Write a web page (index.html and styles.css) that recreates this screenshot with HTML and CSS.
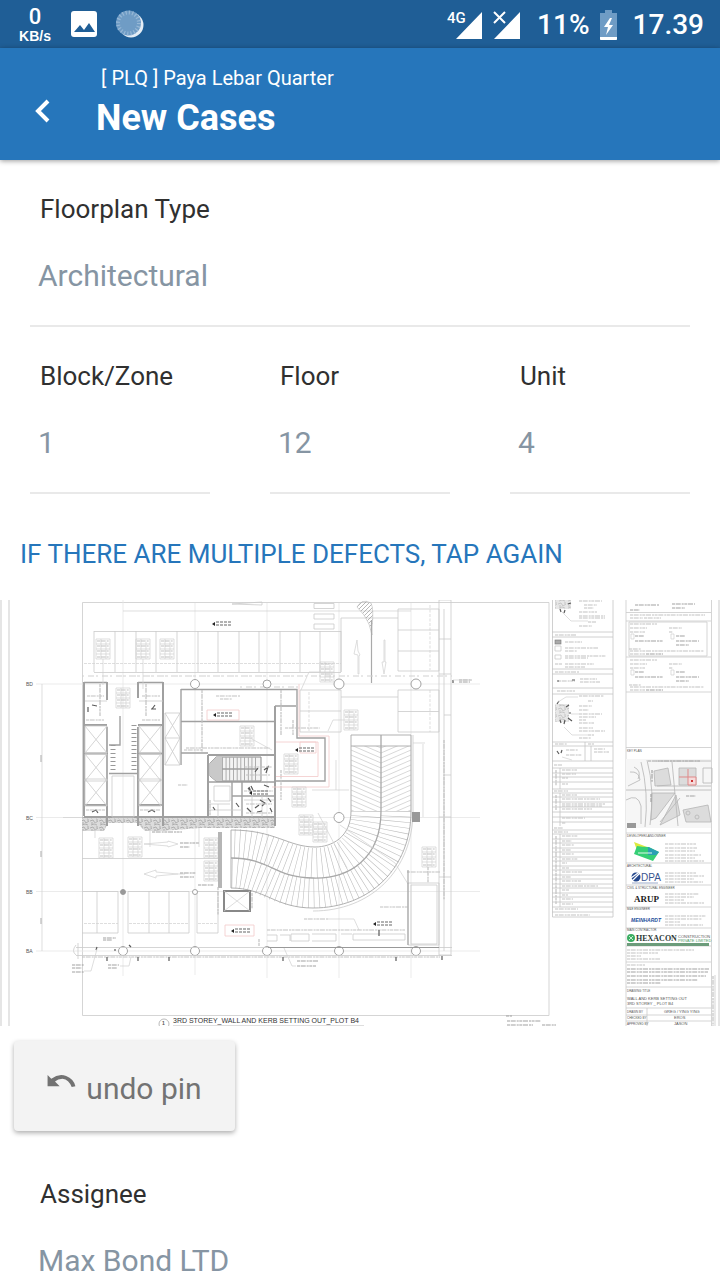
FILE: index.html
```html
<!DOCTYPE html>
<html lang="en">
<head>
<meta charset="utf-8">
<meta name="viewport" content="width=device-width, initial-scale=1">
<title>New Cases</title>
<link rel="stylesheet" href="styles.css">
</head>
<body>
<div class="app">
  <div class="status">
    <div class="status-side">
      <div class="speed"><span class="speed-num">0</span><span class="speed-unit">KB/s</span></div>
      <svg class="pic" width="26" height="26" viewBox="0 0 26 26"><rect width="26" height="26" rx="3" fill="#fff"/><path d="M3 21l6-7 4 5 5-7 6 9z" fill="#1f5e96"/></svg>
      <svg width="30" height="30" viewBox="0 0 30 30"><circle cx="15" cy="16" r="12.500" fill="#e4edf5"/><circle cx="12.500" cy="14" r="12.500" fill="#6f9cc5"/><circle cx="12.500" cy="14" r="10.500" fill="none" stroke="#97b8d6" stroke-width="4" stroke-dasharray="1.200 2.100"/></svg>
    </div>
    <div class="status-side status-right">
      <svg width="76" height="30" viewBox="0 0 76 30"><text x="0" y="13" class="net">4G</text><path d="M9 29L35 2V29zM47 29L73 2V29z" fill="#fff"/><path d="M45 0H60V13L55 17L45 12z" fill="#1f5e96"/><path d="M47 2l11 11M58 2L47 13" stroke="#fff" stroke-width="2"/></svg>
      <span class="pct">11%</span>
      <svg class="bat" width="17" height="30" viewBox="0 0 17 30"><path d="M5 0h7v3h5v27H0V3h5z" fill="#6f9cc5"/><path d="M0 27h17v2q0 1-1 1H1q-1 0-1-1z" fill="#fff"/><path d="M10 8l-6 9h4l-2 8 7-10H9l3-7z" fill="#fff"/></svg>
      <span class="clock">17.39</span>
    </div>
  </div>
  <header class="bar">
    <button class="back" aria-label="Back"><svg width="16" height="24" viewBox="0 0 16 24"><path d="M13 2L3 12l10 10" fill="none" stroke="#fff" stroke-width="4"/></svg></button>
    <div class="titles">
      <div class="project">[&#8197;PLQ&#8197;] Paya Lebar Quarter</div>
      <h1>New Cases</h1>
    </div>
  </header>
  <main>
    <div class="row">
      <div class="field"><label for="type">Floorplan Type</label><input id="type" type="text" value="Architectural"></div>
    </div>
    <div class="row">
      <div class="field"><label for="block">Block/Zone</label><input id="block" type="text" value="1"></div>
      <div class="field"><label for="floor">Floor</label><input id="floor" type="text" value="12"></div>
      <div class="field"><label for="unit">Unit</label><input id="unit" type="text" value="4"></div>
    </div>
    <p class="hint">IF THERE ARE MULTIPLE DEFECTS, TAP AGAIN</p>
    <svg class="plan" viewBox="0 600 720 426" role="img" aria-label="Floor plan">
      <defs>
        <pattern id="chevL" width="30" height="5" patternUnits="userSpaceOnUse" x="351" y="745"><path d="M0 0L30 13M0 -5L30 8M0 -10L30 3M0 5L30 18M0 -15L30 -2" stroke="#bdbdbd" stroke-width=".6"/></pattern>
        <pattern id="chevR" width="30" height="5" patternUnits="userSpaceOnUse" x="381" y="745"><path d="M0 13L30 0M0 8L30 -5M0 3L30 -10M0 18L30 5" stroke="#bdbdbd" stroke-width=".6"/></pattern>
        <pattern id="hatch" width="4" height="4" patternUnits="userSpaceOnUse"><path d="M0 4L4 0" stroke="#999" stroke-width=".7"/></pattern>
        <pattern id="rubble" width="9" height="7" patternUnits="userSpaceOnUse"><rect width="9" height="7" fill="#dcdcdc"/><path d="M0 2l3-1 2 3 3-2M1 6l3-1 3 1M7 0v2M2 3v2" stroke="#a2a2a2" stroke-width=".8" fill="none"/></pattern>
        <g id="note"><path d="M0 0H14V20H0zM0 5H14M0 10H14M0 15H14M5 0V20M10 3V20" class="thin"/><path d="M1 2H13M1 7H13M1 12H13M1 18H13" class="micro"/></g>
        <g id="shaft"><path d="M0 0H22V27H0zM0 0L22 27M22 0L0 27" class="line"/></g>
        <g id="callout"><path d="M0 2l3-2v4z" fill="#222"/><path d="M4 0h15M4 3h15" stroke="#999" stroke-width="1.500" stroke-dasharray="3 1"/></g>
        <g id="form"><path d="M3 2H30M3 6H20M42 6H55M3 10H18M42 10H46M2 27H14" class="micro"/><path d="M8 14H17M8 19H36M49 14H58M49 19H72M49 23H62" class="micro dark"/><path d="M4 12h3v5h-3zM44 12h3v5h-3z" class="thin"/><path d="M3 29H77M3 32H18" class="micro"/><path d="M19 32H36" class="micro dark"/></g>
      </defs>
      <rect y="600" width="720" height="426" fill="#fff"/>
      <path d="M1 600V1026M9 600V1026M719 600V1026" stroke="#ddd" stroke-width="1.500"/>

      <!-- sheet border and grid -->
      <path d="M82.500 602.500H549V1015.500H82.500z" class="line"/>
      <path d="M123 600V976M195 603V975M267 603V978M339 603V978M411 603V978M36 684H480M36 817.500H480M36 891.500H480M36 951H480" stroke="#e6e6e6" stroke-width=".8"/>
      <path d="M42 684V951M123 611H411M63 817.500H82" class="thin"/>
      <g class="grid"><text x="26" y="686">BD</text><text x="26" y="820">BC</text><text x="26" y="894">BB</text><text x="26" y="953">BA</text></g>
      <path d="M41 755V762M41 851V857M41 918V924" stroke="#aaa"/>

      <!-- parking -->
      <path d="M94 631.500H341M94 631V672M115 631V672M136 631V672M156 631V672M177 631V672M198 631V672M218 631V672M239 631V672M259 631V672M280 631V672M300 631V672M320 631V672M341 631V672M94 672.500H341" class="line"/>
      <path d="M84 663.500H341" class="thin" stroke-dasharray="3 1"/>
      <path d="M314 603.500h20v5h-20zM314 614h20v5h-20zM314 624h20v5h-20zM232 604l30-2v3zM398 609H439V671H398zM398 630H439M398 651H439M398 690H439V732H398zM398 711.500H439M341 618H398M341 697H398M341 618V672M300 690H341V732H300zM300 711H341M444 609V951M451 600V956M439 600V955" class="line"/>
      <path d="M430 605V670M430 690V732M309 692V732" class="thin" stroke-dasharray="3 1.500"/>
      <path d="M357 607q5-9 14-4q3 6 1 24v8q-2-12-8-20z" fill="url(#hatch)" stroke="#bbb" stroke-width=".6"/>
      <path d="M371.500 620V683" stroke="#aaa" stroke-width="1.200"/>
      <path d="M358 674V655l-4-1 3-14 1 11 2 4-1 1V674zM384 640V662h-2l2 12 2-12h-1V640z" class="thin"/>
      <path d="M82 676H296M123 676H452M240 687H298" class="micro pale"/>
      <path d="M82 891.500H118V933H82M97 891V933M128 891.500H189V933H128zM149 891V933M169 891V933M197 891.500H218V933H197zM82 858.500H218" class="line"/>
      <path d="M84 923.500H118M129 923.500H188M198 923.500H217" class="thin" stroke-dasharray="3 1"/>
      <path d="M144 844l24-2v-1l10 3-10 3v-1zM144 874l12-4v2l22 2-22 2v2zM178 874h7" class="thin"/>
      <path d="M180 843H199M180 847H190M180 873H196M180 877H194M152 832H182M198 885H214" class="micro dark"/>

      <!-- column markers -->
      <g fill="#fff" stroke="#999" stroke-width=".9"><circle cx="195" cy="684" r="4.500"/><circle cx="267" cy="684" r="4"/><circle cx="339" cy="684" r="5"/><circle cx="416" cy="684" r="5"/><circle cx="339" cy="817.500" r="5"/><circle cx="123" cy="951" r="4.500"/><circle cx="195" cy="951" r="4.500"/><circle cx="267" cy="951" r="4.500"/><circle cx="339" cy="951" r="4.500"/><circle cx="416" cy="951" r="4.500"/><circle cx="195" cy="892" r="2.500"/><circle cx="123" cy="892" r="2.500" fill="#999"/></g>

      <!-- core -->
      <path d="M82 817H275V828H200L162 831H145L137 823H108L104 831H82z" fill="url(#rubble)"/>
      <path d="M84 682V816M107 682V700M107 727V826M138 727V826M138 682V698M163 682V826M84 725H107M138 725H163M84 753.500H107M138 753.500H163M84 805H107M138 805H163M84 817H275" class="wall"/>
      <path d="M84 682.500H107M138 682.500H163M109 773.500H138M109 745H120V716M181 689.500H297V738H325V781H276M181 689V765M181 721.500H275M181 753H208M275 706H296M208 782H232V816M208 782H275M232 796H275M242 782V817" class="wall slim"/>
      <path d="M275 706V754M208 755H275V826M208 755V817" class="wall"/>
      <use href="#shaft" x="85" y="726"/><use href="#shaft" x="85" y="754"/><use href="#shaft" x="85" y="779"/><use href="#shaft" x="139" y="726"/><use href="#shaft" x="139" y="754"/><use href="#shaft" x="139" y="779"/>
      <path d="M165 713H180V765H165zM165 738H180M165 713L180 738M180 713L165 738M165 738L180 765M180 738L165 765M112 776H134V817H112zM85 701H107M139 701H163" class="line"/>
      <path d="M113 745V773M134 725V773" stroke="#999" stroke-width="5" stroke-dasharray="1 3"/>
      <path d="M216 757h45v24h-45l-6-5v-13z" fill="#f3f3f3" stroke="#888"/><path d="M216 757h6v24h-6l-6-5v-13z" fill="#c9c9c9"/>
      <path d="M222 763H258M222 775H258" stroke="#909090" stroke-width="11" stroke-dasharray=".7 3"/><path d="M222 769H258" stroke="#777" stroke-width="1.200"/>
      <path d="M214 786H230V801H214zM209 804H230M209 810H242M218 804V817M244 800H274M252 796V817M262 796V817" class="line"/>
      <path d="M88 712v-5M92 705l5 1M155 705l-3 4M151 709h5M92 812l4-2 2 3M148 812l4-2 3 2M264 770l4-3-2 6M248 788l3 4-2-5M260 800l5 3-3 3M253 790l-2-4M264 785l5 2M255 808l4-3M268 798l3 4M236 803l3 4M247 808l4 4M213 807l2 3M255 772l3-4M257 812l5-1M270 808l2 4" class="ink"/>
      <path d="M87 696H104M142 696H160M86 720H104M142 720H160M100 684V716M146 684V716M86 810H105M140 810H160M216 696H240M220 699H232M186 748H270M202 690V752M184 750H202M178 785H188M244 767H272M246 775H270M244 791H273M210 800V816M281 690V735M285 728H320M293 720V735M281 770V800M246 804H272M246 813H272" class="micro"/>
      <g fill="none" stroke="#f3c9c9" stroke-width=".8"><path d="M276 776.500H318V742H276M299 684V736H329V787H272M207 710H239V720H207zM225 925H254V936H225zM300 742H316V753H300z"/></g>
      <use href="#callout" x="212" y="622"/><use href="#callout" x="213" y="713"/><use href="#callout" x="295" y="748"/><use href="#callout" x="249" y="791"/><use href="#callout" x="373" y="922"/><use href="#callout" x="231" y="929"/>
      <use href="#note" x="96" y="639"/><use href="#note" x="136" y="639"/><use href="#note" x="160" y="639"/><use href="#note" x="116" y="688"/><use href="#note" x="320" y="662"/><use href="#note" x="344" y="710"/><use href="#note" x="240" y="726"/><use href="#note" x="284" y="754"/><use href="#note" x="292" y="787"/><use href="#note" x="99" y="838"/><use href="#note" x="128" y="837"/><use href="#note" x="204" y="838"/><use href="#note" x="204" y="861"/><use href="#note" x="313" y="822"/><use href="#note" x="422" y="847"/><use href="#note" x="299" y="815"/>
      <path d="M301 690l8-18h11M328 731l5-11h11M103 659v26M143 659v30M95 838v-16M150 847v-25M199 847v-25M312 790H349M336 760v30M250 738l22 12" class="thin"/>

      <!-- ramp -->
      <rect x="351" y="746" width="30" height="65" fill="url(#chevL)"/><rect x="381" y="746" width="30" height="65" fill="url(#chevR)"/>
      <g fill="none" stroke="#bdbdbd" stroke-width="30" stroke-dasharray=".6 4.400"><path d="M366 811C366 848 341 863 315 863C283 863 275 844 231 844"/><path d="M396 811C396 868 355 893 312 893C275 893 262 873 231 873"/></g>
      <g fill="none" stroke="#a8a8a8" stroke-width=".9"><path d="M351 735V811C351 837 332 847 315 847C288 847 275 830 231 830V888C265 888 275 908 313 908C370 908 411 868 411 811V735z"/><path d="M381 735V811C381 858 350 879 313 878C275 878 270 858 231 858" stroke-width="1.300"/><path d="M413 735V811C413 870 371 911 313 911" stroke="#d0d0d0"/><path d="M351 746H411"/></g>
      <path d="M220 832V888" stroke="#b5b5b5" stroke-width="4"/>
      <path d="M224 891H250V911H224z" fill="#fff" stroke="#888" stroke-width="2"/><path d="M224 891L250 911M250 891L224 911" class="thin"/>
      <path d="M318 813L347 868M340 825L395 863L408 884M423 744V817M413 743H425" class="thin"/><rect x="412" y="812" width="8" height="10" fill="#999"/>
      <path d="M380 907H408M304 919H328M218 887V915M252 893V909M407 872H440M428 867V883M444 740V900" class="micro"/><path d="M328 919H354L359 930" class="thin"/>

      <!-- lower edge -->
      <path d="M76 947.500H452M76 955.500H452M408 883H439V945H408zM411 885H437V944H411zM267 935H277V941H267M280 935H290V941M291 934H309V941H291zM312 934H336V941H312M341 934H352M353 934H405V940H353z" class="line"/>
      <path d="M408 870V945M268 947.500H339M339 947.500H439" stroke="#999"/>
      <path d="M267 930H405M82 957H440M259 939V946" class="micro"/>
      <path d="M107 957v4M138 957v4M169 957v4M283 957v4M396 957v4M96 950l1-3M115 949v2M129 945l2 2M379 930v6M442 956v4M453 680v3" class="ink"/>
      <path d="M72 965H84M72 968H82M72 972H84M108 965H119M108 968H117M103 938H116M103 940H112M297 961H319M297 966H316M459 680H472M459 682H470" class="micro dark"/>
      <path d="M84 971H91L97 949M120 966H129L131 957M296 966H292L284 948M453 680h18" class="thin"/>
      <path d="M78 943v16M76 945q-5 6 0 10M439 600h12M439 639h12M439 674h12M444 715h7M444 775h7M439 817h12M439 877h12M439 955h12" class="line"/>

      <!-- drawing caption -->
      <circle cx="164" cy="1024" r="5" fill="#fff" stroke="#bbb"/><text x="162" y="1025" class="capnum">1</text>
      <text x="173" y="1023" class="cap">3RD STOREY_WALL AND KERB SETTING OUT_PLOT B4</text>
      <path d="M173 1025.500H364" class="thin"/><path d="M506 1016H512M507 1021H541M507 1025H533M542 1025H556" class="micro dark"/>

      <!-- legend column -->
      <path d="M552.500 600V917H613V600M552 632H613M552 637H613M552 669H613M552 674H613M552 688H613M552 694H613M552 742H613M552 746H613M552 761H613M552 768H613M552 773H613M552 777H613M552 782H613M552 789H613M552 793H613M552 797H613M552 802H613M552 807H613M552 812H613M552 817H613M552 822H613M552 830H613M552 834H613M552 839H613M552 843H613M552 848H613M552 852H613M552 857H613M552 861H613M552 866H613M552 870H613M552 875H613M552 879H613M552 884H613M552 888H613M552 893H613M552 897H613M552 902H613M552 907H613M552 912H613M560 768V789M560 793V826M560 834V907M585 742V761M591 746V761" stroke="#c4c4c4" stroke-width=".8" fill="none"/>
      <rect x="555" y="640" width="6" height="4" fill="#aaa" stroke="#777" stroke-width=".6"/><path d="M555 646h6v5h-6zM555 655h6v4h-6z" class="line"/>
      <path d="M555 635H576M565 642H582M565 648H598M565 651H577M565 656H606M565 658H588M555 664H562M565 664H594M565 667H585M555 672H579M557 691H575M558 681H575M580 679H597M580 682H600M555 744H567M588 744H594M566 750H578M566 755H582M594 749H605M594 752H609M554 765H562M562 770H577M562 774H576M562 778H568M562 784H568M554 791H568M562 795H577M562 799H600M562 804H605M562 806H602M562 809H592M562 818H585M562 823H566M554 828H563M554 832H568M562 836H578M562 841H572M562 845H574M562 850H571M562 854H574M562 859H578M562 863H567M562 868H569M562 872H582M562 877H571M562 881H581M562 886H598M562 890H569M562 895H568M562 899H573M562 904H573M555 909H578M555 915H590M556 836V904M556 770V786M556 795V810" class="micro"/>
      <path d="M579 601H602M584 605H597M584 608H594M579 612H597M579 616H605M579 618H605M588 622H596M579 626H592M579 696H604M588 701H593M579 706H592M579 710H589M579 714H602M579 717H596M579 720H586M579 723H594M579 728H593M579 731H605M588 735H594M579 738H591" class="micro"/>
      <path d="M555 600H571V609H555zM555 704H569V722H555z" fill="url(#rubble)" opacity=".7"/>
      <path d="M560 609l1 3M568 604l3-1M565 610l-1 3M557 704l2-3M566 707l3-2M569 713h2M568 718l4 3M560 720l1 3M565 720l-1 4M557 751l2 3M562 750l-1 3M572 680h3M557 681h2" class="ink"/>
      <path d="M562 612l9 9h17M564 727l8 8h16M558 702l8-5h12M571 714h8M562 757l10 3" class="thin"/>

      <!-- title block -->
      <path d="M626 600V1026M711.500 600V1026M626 612.500H711M626 621H711M629 622H707V656H629zM626 657H711M626 692H711M626 747.500H711M626 833H711M626 863H711M626 885H711M626 907H711M626 928H711M626 946H711M626 962H711M626 987H711M626 1008H711M626 1015H711M626 1021H711M647 1008V1026M715 975V1026" class="line"/>
      <path d="M635 605H659M672 604H695M672 608H685M630 610H640" class="micro dark"/><path d="M630 615H705M630 618H643M644 618H661" class="micro"/>
      <use href="#form" x="627" y="622"/><use href="#form" x="627" y="658"/>
      <text x="627" y="752" class="tiny">KEY PLAN</text>
      <g class="map"><path d="M626 759H711V828H626z" fill="#f6f6f6" stroke="none"/><path d="M654 771l14-3 3 17-16 1zM679 768h17v17h-17zM652 793h23l-19 25-5 2zM676 795l4 20-20 10zM683 810l25-5 3 17H686z" fill="#dcdcdc"/><path d="M641 762q8 30 4 65M647 760q8 30 3 65M626 790H711M657 786H711M656 761H711M630 772q9-1 10 8l-12 6M703 768h9v15h-9zM672 762l6 64M626 800q12-7 15 6v18M660 822l20-24M634 767q8 4 4 12"/><circle cx="688" cy="813" r="2"/><circle cx="697" cy="817" r="2"/></g>
      <path d="M688 777h8v8h-8zM688 769v8M679 777h9" fill="#f6dada" stroke="#df8989"/><path d="M691 781h2" stroke="#c33" stroke-width="2"/>
      <path d="M648 761H700M686 796H696M652 770v12M651 794v8" class="micro dark"/><rect x="627" y="823" width="9" height="5" fill="#999"/>
      <text x="627" y="837" class="tiny">DEVELOPER/LANDOWNER</text><text x="627" y="867" class="tiny">ARCHITECTURAL</text><text x="627" y="889" class="tiny">CIVIL &amp; STRUCTURAL ENGINEER</text><text x="627" y="910" class="tiny">M&amp;E ENGINEER</text><text x="627" y="931" class="tiny">MAIN CONTRACTOR</text>
      <path d="M634 842L647 847L638 853z" fill="#dbea3f"/><path d="M637 846q5 1 12 1l10 5-6 9-19-7z" fill="#36cf76"/><path d="M648 847l11 5-3 3h-8z" fill="#2b9fb5"/><path d="M638 853h14" stroke="#dff7e8"/>
      <circle cx="636" cy="877" r="4.500" fill="#24478c"/><path d="M632 881l8-8M631 878l7-5" stroke="#fff" stroke-width="1.200"/><path d="M632 883H658" stroke="#9aa9c8"/>
      <text x="641" y="881" class="dpa">DPA</text><text x="634" y="902" class="arup">ARUP</text><text x="631" y="922" class="mein">MEINHARDT</text>
      <circle cx="631" cy="938" r="4" fill="#3cae63"/><path d="M629 936l4 4M633 936l-4 4" stroke="#c3efce"/><text x="636" y="941" class="hexa">HEXACON</text><text x="678" y="938" class="hexs">CONSTRUCTION</text><text x="678" y="942" class="hexs green">PRIVATE LIMITED</text><rect x="627" y="943" width="82" height="3" fill="#6c9c7b"/>
      <path d="M665 844H696M665 848H697M665 851H695M665 855H701M665 858H695M665 861H704M665 873H696M665 876H704M665 879H694M665 882H703M665 894H699M665 897H694M665 900H684M665 903H704M665 916H706M665 919H702M665 922H680M665 925H703M627 950H694M627 953H658M627 956H641M627 959H660M627 965H645" class="micro"/>
      <path d="M627 969H709M627 972H708M627 976H706M627 980H698M627 983H661" class="micro dark"/>
      <text x="627" y="992" class="tiny">DRAWING TITLE</text><text x="627" y="1000" class="small">WALL AND KERB SETTING OUT</text><text x="627" y="1005" class="small">3RD STOREY _ PLOT B4</text>
      <text x="627" y="1013" class="tiny">DRAWN BY</text><text x="664" y="1013" class="small">GREG / YING YING</text><text x="627" y="1019" class="tiny">CHECKED BY</text><text x="674" y="1019" class="small">EROS</text><text x="627" y="1025" class="tiny">APPROVED BY</text><text x="674" y="1025" class="small">JASON</text>
      <path d="M713 976V1026" class="micro"/>
    </svg>
    <button class="undo"><svg width="29" height="13" viewBox="0 0 30 14"><path d="M0 0L4 4Q12-2 20 1Q28 4 30 12L26 13Q23 5 16 4Q11 4 8 7L13 12H0z" fill="#727272"/></svg>undo pin</button>
    <div class="row">
      <div class="field"><label for="assignee">Assignee</label><input id="assignee" type="text" value="Max Bond LTD"></div>
    </div>
  </main>
</div>
</body>
</html>
```
FILE: styles.css
```css
* { box-sizing: border-box; }
body { margin: 0; background: #fff; color: #303030; font-family: Roboto, "Liberation Sans", sans-serif; }
.app { display: flex; flex-direction: column; height: 100vh; }
.status { flex: none; display: flex; justify-content: space-between; align-items: center; height: 48px; padding: 0 16px 0 18px; background: #1f5e96; color: #fff; }
.status-side { display: flex; align-items: center; gap: 19px; }
.status-right { gap: 10px; padding-top: 2px; font-size: 28px; font-weight: 500; line-height: 46px; }
.status-right .pct { margin-left: 4px; }
.status-right .clock { margin-left: 6px; }
.speed { display: flex; flex-direction: column; align-items: center; width: 34px; font-family: "Liberation Sans", sans-serif; font-weight: 700; }
.speed-num { font-size: 22px; line-height: 24px; font-family: Roboto, sans-serif; font-weight: 500; }
.speed-unit { font-size: 14px; line-height: 14px; }
.net { font: 500 15px Roboto, sans-serif; fill: #fff; }
.bar { flex: none; position: relative; display: flex; height: 112px; padding-left: 35px; gap: 42px; background: #2676bb; color: #fff; box-shadow: 0 1px 5px rgba(0, 0, 0, .4); }
.back { align-self: flex-start; margin-top: 50px; padding: 0; width: 19px; height: 26px; border: 0; background: none; cursor: pointer; }
.back svg { display: block; }
.titles { padding-top: 18px; }
.project { padding-left: 5px; font-size: 20px; line-height: 24px; }
h1 { margin: 6px 0 0; font-size: 36px; line-height: 44px; font-weight: 700; }
main { flex: 1; min-height: 0; overflow-y: auto; scrollbar-width: none; }
.row { display: flex; gap: 60px; padding: 0 30px; }
.field { flex: 1; min-width: 0; padding-top: 34px; }
.field label { display: block; padding-left: 10px; font-size: 26px; line-height: 30px; }
.field input { display: block; width: 100%; height: 103px; padding: 2px 8px 0; border: 0; border-bottom: 2px solid #e9e9e9; border-radius: 0; background: none; font: 30px Roboto, "Liberation Sans", sans-serif; color: #8695a3; outline-color: #2676bb; }
.hint { margin: 0; padding: 44px 20px 30px; font-size: 26px; line-height: 32px; color: #2676bb; }
.plan { display: block; width: 100%; height: auto; }
.undo { display: flex; align-items: center; justify-content: center; gap: 10px; width: 221px; height: 90px; margin: 15px 14px 14px; border: 0; border-radius: 4px; background: #f3f3f3; color: #737373; box-shadow: 0 2px 5px rgba(0, 0, 0, .32); font: 30px/40px Roboto, "Liberation Sans", sans-serif; cursor: pointer; padding: 5px 0 0; }
.undo svg { margin-bottom: 14px; }
.plan text { font-family: "Liberation Sans", sans-serif; fill: #555; }
.line { fill: none; stroke: #cacaca; stroke-width: .8; }
.thin { fill: none; stroke: #d0d0d0; stroke-width: .7; }
.wall { fill: none; stroke: #a0a0a0; stroke-width: 2; }
.wall.slim { stroke-width: 1.4; }
.ink { fill: none; stroke: #5a5a5a; stroke-width: 1.2; }
.micro { fill: none; stroke: #c2c2c2; stroke-width: 1.2; stroke-dasharray: 3 .7 5 1 2 .6; }
.plan .dark { stroke: #a2a2a2; }
.plan .pale { stroke: #d2d2d2; stroke-dasharray: 2 4 6 2; }
.map { fill: none; stroke: #b5b5b5; stroke-width: .8; }
.plan .grid { font-size: 5px; }
.plan .cap { font-size: 7px; fill: #333; }
.plan .capnum { font-size: 5px; font-weight: 700; }
.plan .tiny { font-size: 3px; }
.plan .small { font-size: 4px; }
.plan .dpa { font-size: 10px; fill: #38558f; }
.plan .arup { font: 700 9px "Liberation Serif", serif; fill: #222; }
.plan .mein { font-size: 5px; font-weight: 700; font-style: italic; fill: #1c4d9a; }
.plan .hexa { font: 700 8px "Liberation Serif", serif; fill: #2d3a36; }
.plan .hexs { font-size: 4px; }
.plan .green { fill: #4f9a68; }
```
